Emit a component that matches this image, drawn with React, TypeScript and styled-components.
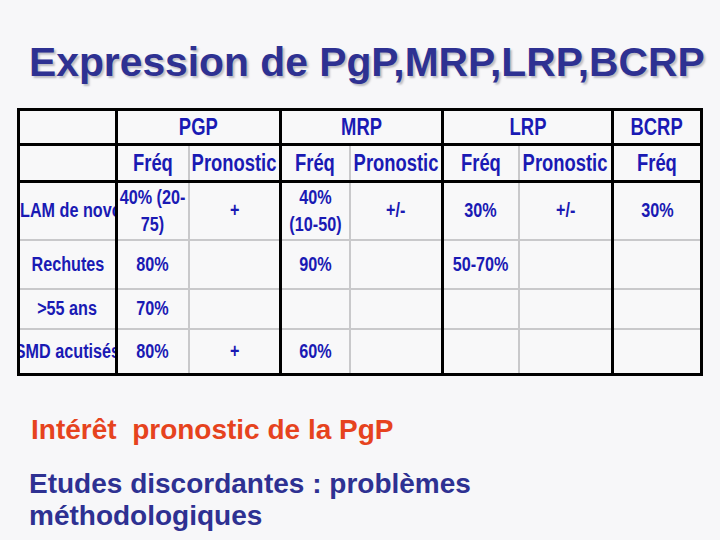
import React from "react";
import styled, { createGlobalStyle } from "styled-components";

const GlobalStyle = createGlobalStyle`
  html, body {
    margin: 0;
    padding: 0;
    background: #f7f7f9;
  }
  body {
    width: 720px;
    height: 540px;
    overflow: hidden;
    font-family: "Liberation Sans", Arial, sans-serif;
  }
`;

const Slide = styled.div`
  width: 720px;
  height: 540px;
  box-sizing: border-box;
  padding-top: 39px;
  background: #f7f7f9;
  display: flex;
  flex-direction: column;
  align-items: flex-start;
`;

const Title = styled.h1`
  margin: 0;
  padding-left: 29px;
  font-family: "Liberation Sans", Arial, sans-serif;
  font-weight: bold;
  font-size: 40.8px;
  line-height: 46px;
  color: #2e3192;
  text-shadow: 2px 2px 2px rgba(100, 100, 115, 0.4);
  white-space: nowrap;
`;

const Grid = styled.table`
  margin: 23px 0 0 17px;
  border-collapse: collapse;
  table-layout: fixed;
  width: 686px;
  border: 3px solid #000;
  background: #f8f8f9;
`;

const Col = styled.col<{ $w: number }>`
  width: ${(p) => p.$w}px;
`;

const Row = styled.tr<{ $h: number; $head?: boolean }>`
  height: ${(p) => p.$h}px;
  & > td {
    border-bottom: ${(p) => (p.$head ? "3px solid #000" : "2px solid #c9c9cb")};
  }
`;

const Cell = styled.td<{ $group?: boolean }>`
  padding: 0;
  overflow: hidden;
  vertical-align: middle;
  border-left: ${(p) => (p.$group ? "3px solid #000" : "2px solid #c9c9cb")};
`;

const CellBox = styled.div<{ $align?: "start" | "center" }>`
  display: flex;
  align-items: center;
  justify-content: ${(p) => (p.$align === "start" ? "flex-start" : "center")};
  width: 100%;
  overflow: hidden;
`;

const Label = styled.span<{ $head?: boolean; $align?: "start" | "center" }>`
  display: inline-block;
  flex: none;
  font-family: "Liberation Sans", Arial, sans-serif;
  font-weight: bold;
  font-size: ${(p) => (p.$head ? "23px" : "19.5px")};
  line-height: ${(p) => (p.$head ? "26px" : "27px")};
  color: #1a1ab4;
  white-space: nowrap;
  text-align: center;
  transform: scaleX(${(p) => (p.$head ? 0.8 : 0.83)});
  transform-origin: ${(p) => (p.$align === "start" ? "left center" : "center")};
`;

const Highlight = styled.p`
  margin: 38px 0 0 31px;
  font-family: "Liberation Sans", Arial, sans-serif;
  font-weight: bold;
  font-size: 28px;
  line-height: 32px;
  color: #e6431e;
  white-space: pre;
`;

const Body = styled.p`
  margin: 22px 0 0 29px;
  max-width: 470px;
  font-family: "Liberation Sans", Arial, sans-serif;
  font-weight: bold;
  font-size: 28px;
  line-height: 32px;
  color: #2e3192;
`;

type CellData = {
  text?: React.ReactNode;
  span?: number;
  group?: boolean;
  align?: "start" | "center";
};

const widths = [98, 72, 92, 69, 93, 76, 94, 89];

const groupStarts = [1, 3, 5, 7];

const buildRow = (values: React.ReactNode[], align: ("start" | "center")[] = []): CellData[] =>
  values.map((text, i) => ({
    text,
    group: groupStarts.includes(i),
    align: align[i] ?? "center",
  }));

const rows: { h: number; head?: boolean; cells: CellData[] }[] = [
  {
    h: 35,
    head: true,
    cells: [
      { text: "" },
      { text: "PGP", span: 2, group: true },
      { text: "MRP", span: 2, group: true },
      { text: "LRP", span: 2, group: true },
      { text: "BCRP", group: true },
    ],
  },
  {
    h: 37,
    head: true,
    cells: buildRow(["", "Fréq", "Pronostic", "Fréq", "Pronostic", "Fréq", "Pronostic", "Fréq"]),
  },
  {
    h: 58,
    cells: buildRow(
      [
        "LAM de novo",
        <>
          40% (20-
          <br />
          75)
        </>,
        "+",
        <>
          40%
          <br />
          (10-50)
        </>,
        "+/-",
        "30%",
        "+/-",
        "30%",
      ],
      ["start"]
    ),
  },
  { h: 49, cells: buildRow(["Rechutes", "80%", "", "90%", "", "50-70%", "", ""]) },
  { h: 40, cells: buildRow([">55 ans", "70%", "", "", "", "", "", ""]) },
  { h: 46, cells: buildRow(["SMD acutisés", "80%", "+", "60%", "", "", "", ""]) },
];

export default function App() {
  return (
    <>
      <GlobalStyle />
      <Slide>
        <Title>Expression de PgP,MRP,LRP,BCRP</Title>
        <Grid>
          <colgroup>
            {widths.map((w, i) => (
              <Col key={i} $w={w} />
            ))}
          </colgroup>
          <tbody>
            {rows.map((row, r) => (
              <Row key={r} $h={row.h} $head={row.head}>
                {row.cells.map((c, i) => (
                  <Cell key={i} colSpan={c.span} $group={c.group}>
                    <CellBox $align={c.align}>
                      <Label $head={row.head} $align={c.align}>
                        {c.text}
                      </Label>
                    </CellBox>
                  </Cell>
                ))}
              </Row>
            ))}
          </tbody>
        </Grid>
        <Highlight>{"Intérêt  pronostic de la PgP"}</Highlight>
        <Body>Etudes discordantes : problèmes méthodologiques</Body>
      </Slide>
    </>
  );
}
